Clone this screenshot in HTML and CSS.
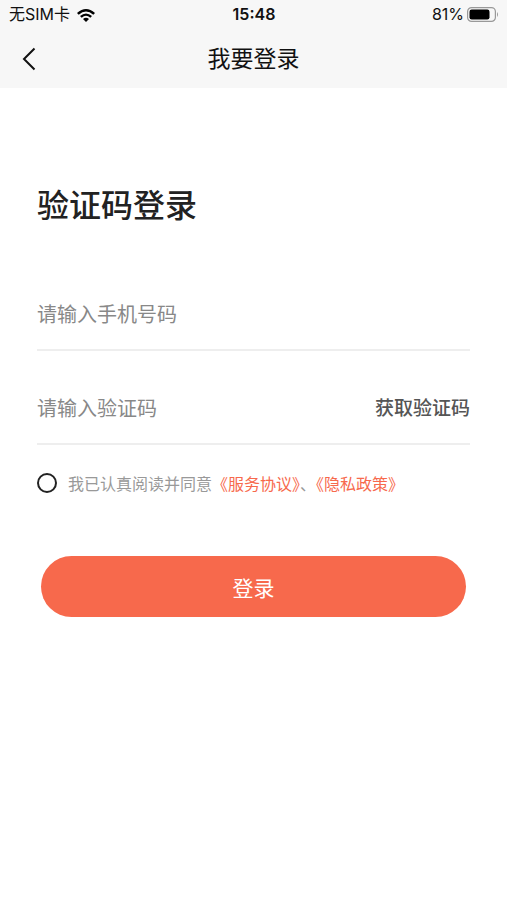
FILE: index.html
```html
<!DOCTYPE html>
<html lang="zh-CN">
<head>
<meta charset="utf-8">
<title>我要登录</title>
<link rel="stylesheet" href="styles.css">
</head>
<body>
<header class="top">
  <div class="status">
    <div class="carrier"><span>无<span class="sim">SIM</span>卡</span>
      <svg class="wifi" width="20" height="14" viewBox="0 0 20 14"><path d="M1 5Q10-3 19 5L17.300 6.700Q10 0.400 2.700 6.700Z"/><path d="M4 8Q10 2.800 16 8L14.300 9.700Q10 6 5.700 9.700Z"/><path d="M7 11Q10 8.500 13 11L10 14Z"/></svg>
    </div>
    <div class="clock">15:48</div>
    <div class="power"><span>81%</span>
      <svg class="battery" width="32" height="15" viewBox="0 0 32 15"><rect x=".6" y=".6" width="27.800" height="13.800" rx="4" fill="none" stroke="#999" stroke-width="1.200"/><rect x="2.500" y="2.500" width="20" height="10" rx="2.200"/><path d="M30 5Q32 7.500 30 10Z" fill="#999"/></svg>
    </div>
  </div>
  <nav class="nav">
    <svg class="back" width="14" height="24" viewBox="0 0 14 24"><path d="M12.500 1.500L2 12L12.500 22.500"/></svg>
    <h1 class="title">我要登录</h1>
  </nav>
</header>
<main class="login">
  <h2 class="heading">验证码登录</h2>
  <div class="field phone"><span>请输入手机号码</span></div>
  <div class="field code"><span>请输入验证码</span><span class="send">获取验证码</span></div>
  <div class="agree"><span class="radio"></span><span class="terms">我已认真阅读并同意<a class="link">《服务协议》</a>、<a class="link">《隐私政策》</a></span></div>
  <button class="submit">登录</button>
</main>
</body>
</html>
```
FILE: styles.css
```css
* { box-sizing: border-box; }
body {
  margin: 0;
  min-height: 900px;
  background: #fff;
  color: #111;
  font-family: Inter, "Noto Sans CJK SC", sans-serif;
}
.top { height: 88px; background: #f7f7f7; }
.status {
  display: grid;
  grid-template-columns: 1fr auto 1fr;
  align-items: center;
  height: 29px;
  padding: 0 8px 0 9px;
  font-size: 16px;
  line-height: 29px;
}
.carrier, .power { display: flex; align-items: center; gap: 6px; }
.power { justify-content: flex-end; gap: 3px; }
.clock { font-weight: 600; }
.nav {
  display: grid;
  grid-template-columns: 1fr auto 1fr;
  align-items: center;
  height: 59px;
  padding: 0 22px;
}
.back path { fill: none; stroke: #111; stroke-width: 2; }
.title { margin: 0; font-size: 23px; font-weight: 400; line-height: 36px; }
.login { padding: 95px 37px 0; }
.heading { margin: 0; font-size: 32px; font-weight: 500; line-height: 46px; color: #222; }
.field {
  display: flex;
  justify-content: space-between;
  align-items: center;
  border-bottom: 2px solid #eee;
  font-size: 20px;
  line-height: 30px;
  color: #888;
}
.phone { height: 71px; margin-top: 51px; }
.code { height: 70px; margin-top: 24px; }
.send { font-size: 19px; font-weight: 500; color: #555; }
.agree { display: flex; align-items: center; height: 30px; margin-top: 23px; }
.radio { width: 20px; height: 20px; border: 2px solid #222; border-radius: 50%; }
.terms { margin-left: 11px; font-size: 16px; white-space: nowrap; color: #999; }
.link { color: #f7694c; }
.submit {
  display: block;
  width: 425px;
  height: 61px;
  margin: 58px auto 0;
  border: 0;
  border-radius: 31px;
  background: #f7694c;
  color: #fff;
  font: 400 21px "Noto Sans CJK SC", sans-serif;
}
```
